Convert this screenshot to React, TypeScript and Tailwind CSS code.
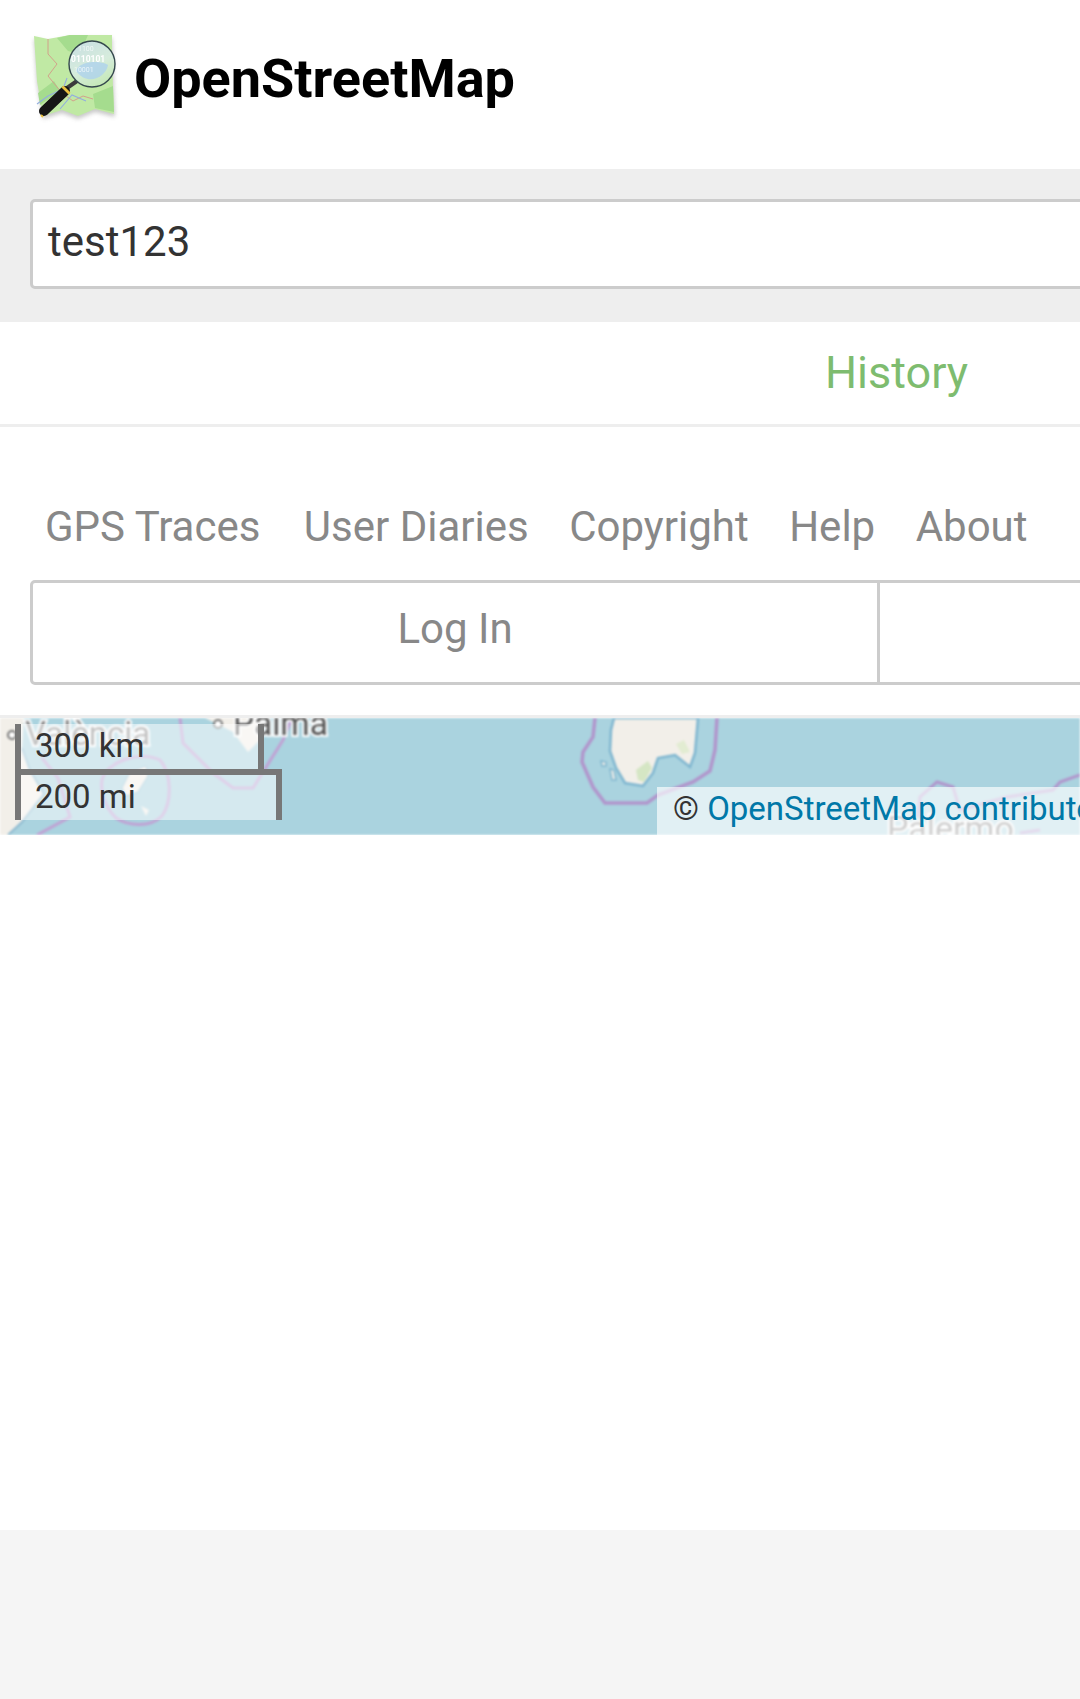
const font = "font-['Roboto',sans-serif]";

function OsmLogo() {
  return (
    <svg viewBox="0 0 96 96" className="w-[96px] h-[96px] shrink-0">
      <defs>
        <filter id="logo-shadow" x="-20%" y="-20%" width="140%" height="140%">
          <feGaussianBlur stdDeviation="2" />
        </filter>
        <filter id="logo-soft">
          <feGaussianBlur stdDeviation="0.35" />
        </filter>
        <linearGradient id="glass" x1="0.2" y1="0" x2="0.7" y2="1">
          <stop offset="0%" stopColor="#c9dfe2" />
          <stop offset="55%" stopColor="#d6ecdc" />
          <stop offset="100%" stopColor="#c4e8b4" />
        </linearGradient>
      </defs>
      <path d="M4 8 L18 11 L40 7 L82 7 L83 26 L84 60 L85 86 L65 81 L48 88 L32 82 L13 88 L7 53 Z" fill="#777" opacity="0.4" filter="url(#logo-shadow)" />
      <g filter="url(#logo-soft)">
        <path d="M4 5 L18 8 L40 4 L82 4 L82 23 L83 57 L84 83 L65 78 L48 85 L32 79 L13 85 L7 50 Z" fill="#c0e9a4" />
        <path d="M27 7 L40 4 L58 4 L50 23 L38 20 Z M63 63 L83 55 L84 81 L65 77 Z M8 62 L24 50 L30 60 L10 74 Z" fill="#a5dc8e" />
        <path d="M18 8 L18 23 L27 33 L18 45 L32 62 L43 70 L53 65 L63 68" fill="none" stroke="#d49a88" strokeWidth="0.9" />
        <path d="M7 73 L18 65 L33 58 L37 47 M30 78 L42 64 L56 70" fill="none" stroke="#93aede" strokeWidth="1.1" />
        <line x1="37" y1="57" x2="47" y2="50" stroke="#3a3a3a" strokeWidth="4" />
        <line x1="14" y1="80" x2="35" y2="60" stroke="#151515" strokeWidth="10" strokeLinecap="round" />
        <line x1="35" y1="60" x2="37" y2="58" stroke="#e8c040" strokeWidth="10" />
        <line x1="11" y1="84" x2="13" y2="86" stroke="#e8c040" strokeWidth="2" />
        <circle cx="62" cy="33" r="23" fill="url(#glass)" stroke="#34474e" strokeWidth="1.4" />
        <path d="M46 40 C50 28 74 30 78 34 C76 46 58 56 46 40 Z" fill="#aed2ec" opacity="0.8" />
        <text x="48" y="20" fontSize="7" fill="#fff" fontFamily="Roboto" opacity="0.7">1100</text>
        <text x="41" y="31" fontSize="8.5" fontWeight="700" fill="#fff" fontFamily="Roboto">0110101</text>
        <text x="44" y="41" fontSize="7" fill="#fff" fontFamily="Roboto" opacity="0.7">10001</text>
      </g>
    </svg>
  );
}

function MapTiles() {
  return (
    <svg viewBox="0 0 1080 117" preserveAspectRatio="none" className="w-full h-full block blur-[0.8px]">
      <rect width="1080" height="117" fill="#aad3df" />
      {/* Spain coast */}
      <path d="M0 0 L24 0 L22 30 L30 52 L44 76 L36 86 L22 104 L8 117 L0 117 Z" fill="#f2efe9" />
      <path d="M22 30 L30 52 L44 76 L36 86 L22 104 L8 117" fill="none" stroke="#8ebad0" strokeWidth="2" />
      <path d="M37 117 L70 99 L58 60 L42 40" fill="none" stroke="#c0a2d4" strokeWidth="3" />
      {/* Ibiza */}
      <path d="M102 62 C106 44 140 32 160 42 C172 56 172 84 162 98 C150 110 128 108 116 100 C106 90 100 76 102 62 Z" fill="none" stroke="#c0a2d4" strokeWidth="3" />
      <path d="M122 70 L130 54 L146 48 L148 58 L138 74 L126 78 Z" fill="#f2efe9" stroke="#8ebad0" strokeWidth="1" />
      <path d="M141 88 L149 92 L146 98 Z" fill="#f2efe9" />
      {/* Mallorca */}
      <path d="M180 0 L183 25 L213 55 L233 70 L253 70 L283 22 L292 0" fill="none" stroke="#c0a2d4" strokeWidth="3" />
      <path d="M205 0 L233 14 L248 34 L260 22 L264 0 Z" fill="#f2efe9" />
      {/* Sardinia */}
      <path d="M595 0 L593 19 L583 34 L582 44 L593 69 L605 85 L647 85 L658 77 L693 64 L710 53 L715 32 L717 0" fill="none" stroke="#b195cc" strokeWidth="3.5" />
      <path d="M614 0 L611 12 L610 33 L616 50 L625 65 L643 68 L653 55 L658 40 L675 37 L690 49 L695 35 L698 0 Z" fill="#f2efe9" stroke="#7fb6d0" strokeWidth="2.5" />
      <path d="M636 52 L648 43 L652 50 L644 64 L638 62 Z" fill="#d5e6c4" />
      <path d="M676 26 L684 22 L690 34 L682 36 Z" fill="#e2ecd2" />
      <path d="M601 43 L606 44 L606 48 L602 48 Z M610 51 L614 52 L616 62 L612 62 Z" fill="#f2efe9" stroke="#7fb6d0" strokeWidth="1.5" />
      {/* Sicily waters */}
      <path d="M918 99 L920 79 L937 64 L953 69 L960 92" fill="none" stroke="#b195cc" strokeWidth="3" />
      <path d="M960 92 L1007 79 L1053 72 L1060 64 L1080 57" fill="none" stroke="#b195cc" strokeWidth="3" />
      <path d="M1020 115 L1040 112" fill="none" stroke="#b195cc" strokeWidth="3" />
      <text x="25" y="27" fontSize="33" fontFamily="Roboto" fill="#888" stroke="#fff" strokeWidth="4" paintOrder="stroke">València</text>
      <text x="233" y="17" fontSize="33.5" fontFamily="Roboto" fill="#555" stroke="#fff" strokeWidth="4" paintOrder="stroke">Palma</text>
      <text x="887" y="122" fontSize="34" fontFamily="Roboto" fill="#777" stroke="#fff" strokeWidth="4" paintOrder="stroke">Palermo</text>
      <circle cx="12" cy="17" r="4" fill="#fff" stroke="#777" strokeWidth="2" />
      <circle cx="218" cy="6" r="4" fill="#fff" stroke="#777" strokeWidth="2" />
    </svg>
  );
}

export default function App() {
  return (
    <div className={`${font} w-[1080px] h-[1699px] overflow-hidden bg-[#f5f5f5]`}>
      <div className="bg-white h-[1530px] w-[1080px]">
        <header className="h-[169px] flex items-center pl-[30px] pb-[12px] gap-[8px]">
          <OsmLogo />
          <h1 className="text-[54px] leading-none font-bold text-black">OpenStreetMap</h1>
        </header>

        <div className="h-[153px] bg-[#eee] pt-[30px] pl-[30px]">
          <div className="w-[1200px] h-[90px] bg-white border-[3px] border-[#ccc] rounded-[5px] pl-[15px] flex items-center pb-[6px] text-[42px] text-[#333]">
            test123
          </div>
        </div>

        <nav className="h-[105px] border-b-[3px] border-[#eee] flex items-center pl-[825px] text-[45px] text-[#7ebc6f]">
          History
        </nav>

        <div className="pt-[72px] pl-[45px] flex gap-[40.5px] text-[42px] leading-[56px] text-[#888] whitespace-nowrap">
          <span className="mr-[3px]">GPS Traces</span>
          <span>User Diaries</span>
          <span>Copyright</span>
          <span>Help</span>
          <span>About</span>
        </div>

        <div className="mt-[25px] ml-[30px] flex w-[1200px] h-[105px] border-[3px] border-[#ccc] rounded-[5px] text-[42px] text-[#888]">
          <div className="w-[847px] border-r-[3px] border-[#ccc] flex items-center justify-center pb-[8px]">Log In</div>
          <div className="flex-1" />
        </div>

        <div className="relative mt-[30px] h-[120px] border-t-[3px] border-[#eee] overflow-hidden">
          <MapTiles />
          <div className="absolute left-[15px] top-[6px] text-[33px] leading-none text-[#333]">
            <div className="w-[249px] h-[45px] bg-white/50 border-x-[6px] border-[#777] pl-[14px] pb-[2px] flex items-center">300 km</div>
            <div className="w-[267px] h-[51px] bg-white/50 border-x-[6px] border-t-[6px] border-[#777] pl-[14px] pb-[2px] flex items-center">200 mi</div>
          </div>
          <div className="absolute left-[657px] bottom-0 w-[423px] h-[48px] bg-white/65 pl-[16px] pb-[4px] flex items-center text-[33px] text-[#333] whitespace-nowrap">
            <span>©&nbsp;</span>
            <span className="text-[#0078a8]">OpenStreetMap contributors</span>
          </div>
        </div>
      </div>
    </div>
  );
}
